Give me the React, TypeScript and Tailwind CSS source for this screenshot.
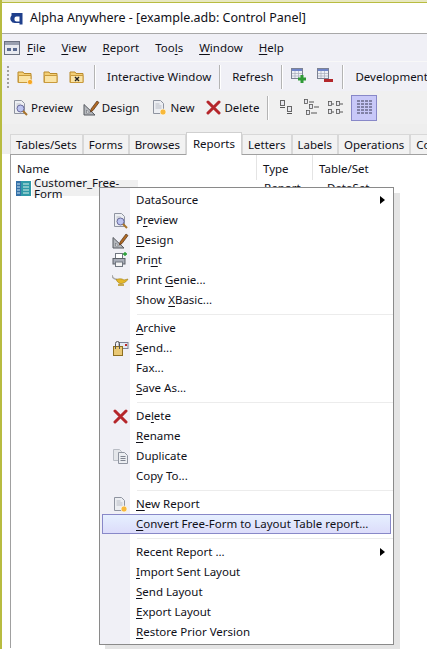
import type { ReactNode } from "react";

const Sep = () => <div className="mx-[8px] h-[24px] w-[2px] shrink-0 border-l border-[#b4b4b4] bg-white" />;

function Mn({ before = "", u, after = "" }: { before?: string; u: string; after?: string }) {
  return (
    <span className="whitespace-pre">
      {before}
      <span className="underline decoration-1 underline-offset-2">{u}</span>
      {after}
    </span>
  );
}

const Folder = ({ kind }: { kind?: "new" | "x" }) => (
  <svg width="17" height="16" viewBox="0 0 17 16">
    <path d="M1 3h5l1 1.500h7v9H1z" fill="#f3cf76" stroke="#b98a2c" />
    <path d="M1.500 6.500h12.500v7H1.500z" fill="#fae3a4" stroke="#c99a3c" />
    {kind === "new" && <circle cx="13" cy="13" r="2.600" fill="#f6a623" stroke="#fff" strokeWidth=".6" />}
    {kind === "x" && <path d="M6 8l4 4m0-4l-4 4" stroke="#222" strokeWidth="1.400" />}
  </svg>
);

const Page = ({ children }: { children?: ReactNode }) => (
  <svg width="17" height="17" viewBox="0 0 17 17">
    <path d="M2.500 1.500h7l3 3v10h-10z" fill="#eceef2" stroke="#8f94a0" />
    <path d="M4.500 5h4M4.500 7h6M4.500 9h6" stroke="#b9bdc6" />
    {children}
  </svg>
);

const Preview = () => (
  <Page>
    <circle cx="8.500" cy="9.500" r="3.500" fill="#bcc4f0" stroke="#6a6a9a" />
    <path d="M11 12l4 4" stroke="#a8742c" strokeWidth="2" />
  </Page>
);

const NewDoc = () => (
  <Page>
    <circle cx="12" cy="13" r="3" fill="#f8b93a" stroke="#fff" strokeWidth=".6" />
  </Page>
);

const DesignIcon = () => (
  <svg width="17" height="17" viewBox="0 0 17 17">
    <path d="M1 5.500v10.500h11z" fill="#b5b8bd" stroke="#55585e" />
    <path d="M3.500 11v3h3z" fill="#fff" stroke="#70737a" strokeWidth=".7" />
    <path d="M8 10l6-8 2 1.500-6 8-2.500 1.500z" fill="#b06a24" stroke="#50301a" strokeWidth=".7" />
  </svg>
);

const RedX = () => (
  <svg width="15" height="15" viewBox="0 0 15 15">
    <path d="M2 2l11 11M13 2L2 13" stroke="#b5262b" strokeWidth="3" strokeLinecap="round" />
  </svg>
);

const HelpIcon = () => (
  <svg width="15" height="15" viewBox="0 0 15 15">
    <circle cx="7.500" cy="7.500" r="6.800" fill="#5a66d8" stroke="#2f3794" />
    <text x="7.500" y="11.500" textAnchor="middle" fontSize="11" fontWeight="700" fill="#fff" fontFamily="Liberation Sans">?</text>
  </svg>
);

const RefreshIcon = () => (
  <svg width="15" height="16" viewBox="0 0 15 16">
    <path d="M3 10.500A5.200 5.200 0 0 1 9 2.800" fill="none" stroke="#2727d0" strokeWidth="2.200" />
    <path d="M8 .5l4 2.800-4 2.200z" fill="#2727d0" />
    <path d="M12 5.500A5.200 5.200 0 0 1 6 13.200" fill="none" stroke="#a02ab0" strokeWidth="2.200" />
    <path d="M7 15.500l-4-2.800 4-2.200z" fill="#a02ab0" />
  </svg>
);

const GridSign = ({ plus }: { plus: boolean }) => (
  <svg width="17" height="17" viewBox="0 0 17 17">
    <rect x=".5" y=".5" width="11" height="10" fill="#eef0f6" stroke="#7c8294" />
    <rect x="1" y="1" width="10" height="2" fill="#6f84c8" />
    <path d="M1 5.500h10M1 8h10M4 3v7M7.500 3v7" stroke="#a8adbb" strokeWidth=".7" />
    {plus ? (
      <path d="M11 7v8M7 11h8" stroke="#2f9a36" strokeWidth="3" />
    ) : (
      <rect x="7" y="11" width="9" height="3" fill="#b3262b" />
    )}
  </svg>
);

const RedBall = () => (
  <svg width="15" height="15" viewBox="0 0 15 15">
    <defs>
      <radialGradient id="ball" cx=".4" cy=".3" r=".8">
        <stop offset="0" stopColor="#ff9a8a" />
        <stop offset=".5" stopColor="#de2a1e" />
        <stop offset="1" stopColor="#861008" />
      </radialGradient>
    </defs>
    <circle cx="7.500" cy="7.500" r="7" fill="url(#ball)" />
  </svg>
);

const ViewIcon = ({ mode }: { mode: number }) => {
  const doc = (x: number, y: number, key: string) => (
    <rect key={key} x={x + 0.5} y={y + 0.5} width="3" height="4" fill="#e8e8ee" stroke="#555" strokeWidth=".8" />
  );
  return (
    <svg width="17" height="17" viewBox="0 0 17 17">
      {mode === 0 && (
        <>
          <rect x="1.500" y="1.500" width="4" height="5" fill="#e8e8ee" stroke="#666" />
          <path d="M1 8.500h5" stroke="#555" />
          <rect x="8.500" y="7.500" width="4" height="5" fill="#e8e8ee" stroke="#666" />
          <path d="M8 14.500h5" stroke="#555" />
        </>
      )}
      {mode === 1 && (
        <>
          {doc(1, 0, "a")}
          <path d="M6 3h5" stroke="#555" />
          {doc(6, 5, "b")}
          <path d="M11 8h5" stroke="#555" />
          {doc(3, 11, "c")}
          <path d="M8 14h6" stroke="#555" />
        </>
      )}
      {mode === 2 && (
        <>
          {doc(1, 2, "a")}
          <path d="M5 5h2" stroke="#555" />
          {doc(9, 2, "b")}
          <path d="M13 5h3" stroke="#555" />
          {doc(1, 10, "c")}
          <path d="M5 13h2" stroke="#555" />
          {doc(9, 10, "d")}
          <path d="M13 13h3" stroke="#555" />
        </>
      )}
    </svg>
  );
};

const DetailIcon = () => (
  <svg width="17" height="17" viewBox="0 0 17 17">
    <path
      d="M1 2h15M1 5h15M1 8h15M1 11h15M1 14h15"
      stroke="#3b3b55"
      strokeWidth="1"
      strokeDasharray="3 1"
    />
  </svg>
);

const PrintIcon = () => (
  <svg width="16" height="16" viewBox="0 0 16 16">
    <rect x="3.500" y="1.500" width="7" height="5" fill="#fff" stroke="#707680" />
    <rect x="1" y="6.500" width="12" height="5.500" fill="#a8adb8" stroke="#5c6068" />
    <rect x="3.500" y="10" width="7" height="4.500" fill="#f4f4f4" stroke="#707680" />
    <path d="M13 0v4M11 2h4" stroke="#1c9a2c" strokeWidth="1.300" />
  </svg>
);

const LampIcon = () => (
  <svg width="17" height="14" viewBox="0 0 17 14">
    <path d="M0 2c0 3 2 4 5 4.500" fill="none" stroke="#a8a8a8" strokeWidth="1.500" />
    <path d="M4 6.500c3 -1 6 -1 8 .5l4-1c-1 2-3 4-6 4.500H8C6 10 5 8 4 6.500z" fill="#e5b82a" stroke="#9c7a14" strokeWidth=".6" />
    <path d="M6 12h6" stroke="#b89018" strokeWidth="1.500" />
  </svg>
);

const SendIcon = () => (
  <svg width="17" height="17" viewBox="0 0 17 17">
    <rect x="7" y="2.500" width="9" height="6" fill="#e4e8f2" stroke="#7c8294" />
    <rect x="13" y="4" width="2" height="2" fill="#c02a2a" />
    <rect x="1.500" y="6.500" width="9" height="9" fill="#e9c874" stroke="#8e6f20" />
    <path d="M3.500 9V3.500a2 2 0 0 1 4 0V9" fill="none" stroke="#555" />
  </svg>
);

const DupIcon = () => (
  <svg width="17" height="17" viewBox="0 0 17 17">
    <path d="M1.500 1.500h6l2 2v9h-8z" fill="#e4e6ea" stroke="#b8bcc4" />
    <path d="M6.500 4.500h6l3 3v8h-9z" fill="#eceef2" stroke="#8f94a0" />
    <path d="M8.500 8.500h5M8.500 10.500h5M8.500 12.500h5" stroke="#7f8490" />
  </svg>
);

const ReportIcon = () => (
  <svg width="15" height="15" viewBox="0 0 15 15">
    <rect width="15" height="15" fill="#2f9aa8" />
    <rect width="5" height="15" fill="#3470a8" />
    <path d="M1 3h3M1 6h3M1 9h3M1 12h3" stroke="#c8e4f0" />
    <path d="M7 3h6M7 6h6M7 9h6M7 12h6" stroke="#d8f0e8" />
  </svg>
);

const Arrow = () => (
  <svg width="5" height="8" viewBox="0 0 5 8" className="absolute right-[8px] top-[6px]">
    <path d="M0 0l5 4-5 4z" fill="#000" />
  </svg>
);

type Item = { label: ReactNode; icon?: ReactNode; arrow?: boolean; active?: boolean } | "sep";

const items: Item[] = [
  { label: "DataSource", arrow: true },
  { label: <Mn before="P" u="r" after="eview" />, icon: <Preview /> },
  { label: <Mn u="D" after="esign" />, icon: <DesignIcon /> },
  { label: <Mn before="Pri" u="n" after="t" />, icon: <PrintIcon /> },
  { label: <Mn before="Print " u="G" after="enie..." />, icon: <LampIcon /> },
  { label: <Mn before="Show " u="X" after="Basic..." /> },
  "sep",
  { label: <Mn u="A" after="rchive" /> },
  { label: <Mn u="S" after="end..." />, icon: <SendIcon /> },
  { label: "Fax..." },
  { label: <Mn u="S" after="ave As..." /> },
  "sep",
  { label: <Mn before="De" u="l" after="ete" />, icon: <RedX /> },
  { label: <Mn u="R" after="ename" /> },
  { label: "Duplicate", icon: <DupIcon /> },
  { label: "Copy To..." },
  "sep",
  { label: <Mn u="N" after="ew Report" />, icon: <NewDoc /> },
  { label: <Mn u="C" after="onvert Free-Form to Layout Table report..." />, active: true },
  "sep",
  { label: "Recent Report ...", arrow: true },
  { label: <Mn u="I" after="mport Sent Layout" /> },
  { label: <Mn u="S" after="end Layout" /> },
  { label: <Mn u="E" after="xport Layout" /> },
  { label: <Mn u="R" after="estore Prior Version" /> },
];

function ContextMenu() {
  return (
    <div className="absolute left-[97px] top-[187px] w-[295px] border border-[#8a8a8a] bg-white py-[2px] shadow-[6px_6px_0_#e4e4e4]">
      <div className="absolute bottom-0 left-0 top-0 w-[30px] bg-[#f0f0f6]" />
      {items.map((item, i) =>
        item === "sep" ? (
          <div key={i} className="relative flex h-[8px] items-center pl-[37px]">
            <div className="h-[1px] w-full bg-[#ececec]" />
          </div>
        ) : (
          <div key={i} className="relative flex h-[20px] items-center px-[2px]">
            <div
              className={
                item.active
                  ? "flex h-[20px] w-[289px] items-center border border-[#8888c8] bg-gradient-to-b from-[#e6f0ff] to-[#dcdcfa]"
                  : "flex h-[20px] w-[289px] items-center border border-transparent"
              }
            >
              <div className="flex w-[33px] shrink-0 justify-center pl-[1px]">{item.icon}</div>
              <div className="text-[#101018]">{item.label}</div>
            </div>
            {item.arrow && <Arrow />}
          </div>
        ),
      )}
    </div>
  );
}

export default function App() {
  const tabs = ["Tables/Sets", "Forms", "Browses", "Reports", "Letters", "Labels", "Operations", "Code"];
  const menus = [
    <Mn u="F" after="ile" />,
    <Mn u="V" after="iew" />,
    <Mn u="R" after="eport" />,
    <Mn before="Too" u="l" after="s" />,
    <Mn u="W" after="indow" />,
    <Mn u="H" after="elp" />,
  ];

  return (
    <div className="relative h-[649px] w-[427px] overflow-hidden border-l-2 border-[#b8bc40] bg-white font-['Noto_Sans',sans-serif] text-[11.5px] leading-none text-[#101018]">
      <div className="h-[3px] border-b border-[#b8bc40] bg-[#e8e8c0]" />
      {/* title */}
      <div className="flex h-[31px] items-center gap-[5px] border-b border-[#a8a8a8] pl-[8px] text-[12.5px]">
        <svg width="15" height="15" viewBox="0 0 15 15">
          <path d="M1.500 2h11v11.500h-3V12H5a4.500 4.500 0 0 1-3.500-7.500zM4.500 8a2.200 2.200 0 0 0 2 2.500h3V5.500h-3A2.200 2.200 0 0 0 4.500 8z" fill="#1f3f8c" />
        </svg>
        <span>Alpha Anywhere - [example.adb: Control Panel]</span>
      </div>
      {/* menu bar */}
      <div className="flex h-[27px] items-center bg-[#f0f0f6] pl-[2px]">
        <svg width="16" height="14" viewBox="0 0 16 14" className="mr-[7px]">
          <rect x=".5" y=".5" width="15" height="13" fill="#e8eaf0" stroke="#6a7080" />
          <rect x="1" y="1" width="14" height="3" fill="#9aa0b0" />
          <rect x="3" y="7" width="4" height="3" fill="#5a6a90" />
          <rect x="9" y="7" width="4" height="3" fill="#5a6a90" />
        </svg>
        <div className="flex gap-[16px]">{menus.map((m, i) => <div key={i}>{m}</div>)}</div>
      </div>
      {/* toolbar 1 */}
      <div className="flex h-[30px] items-center overflow-hidden whitespace-nowrap border-t border-[#f8f8f8] bg-[#f0f0f6] pl-[5px]">
        <div className="mr-[8px] h-[22px] w-[2px] border-l-2 border-dotted border-[#a0a0a0]" />
        <div className="flex gap-[9px]"><Folder kind="new" /><Folder /><Folder kind="x" /></div>
        <Sep />
        <HelpIcon />
        <span className="ml-[3px]">Interactive Window</span>
        <Sep />
        <RefreshIcon />
        <span className="ml-[3px]">Refresh</span>
        <Sep />
        <div className="flex gap-[9px]"><GridSign plus /><GridSign plus={false} /></div>
        <Sep />
        <RedBall />
        <span className="ml-[3px]">Development</span>
      </div>
      {/* toolbar 2 */}
      <div className="flex h-[33px] items-center bg-[#f0f0f0] pl-[10px]">
        <Preview />
        <span className="ml-[2px] mr-[10px]">Preview</span>
        <DesignIcon />
        <span className="ml-[2px] mr-[12px]">Design</span>
        <NewDoc />
        <span className="ml-[2px] mr-[12px]">New</span>
        <RedX />
        <span className="ml-[3px]">Delete</span>
        <Sep />
        <div className="ml-[2px] flex items-center gap-[7px]">
          <ViewIcon mode={0} />
          <ViewIcon mode={1} />
          <ViewIcon mode={2} />
          <div className="flex h-[26px] w-[26px] items-center justify-center border border-[#8888c8] bg-[#c8c8f8]">
            <DetailIcon />
          </div>
        </div>
      </div>
      {/* tabs */}
      <div className="flex h-[30px] items-end bg-[#eeeeee] pl-[8px]">
        {tabs.map((t) => (
          <div
            key={t}
            className={
              t === "Reports"
                ? "relative top-[1px] flex h-[23px] items-center border border-b-0 border-[#d0d0d0] bg-white px-[6px]"
                : "flex h-[20px] items-center border border-b-0 border-[#d8d8d8] bg-[#f2f2f2] px-[5px]"
            }
          >
            {t}
          </div>
        ))}
      </div>
      {/* list */}
      <div className="ml-[8px] h-[494px] border-l border-t border-[#a0a0a0] bg-white">
        <div className="flex h-[25px] items-center">
          <div className="h-full w-[246px] border-r border-[#e4e4e4] pl-[6px] pt-[8px]">Name</div>
          <div className="h-full w-[56px] border-r border-[#e4e4e4] pl-[6px] pt-[8px]">Type</div>
          <div className="h-full pl-[6px] pt-[8px]">Table/Set</div>
        </div>
        <div className="flex h-[16px] items-center">
          <div className="flex w-[247px] items-center pl-[5px]">
            <ReportIcon />
            <span className="ml-[1px] flex h-[16px] w-[106px] items-center bg-[#f0f0f0] pl-[2px]">Customer_Free-Form</span>
          </div>
          <span className="w-[56px] pl-[6px]">Report</span>
          <span className="pl-[13px]">DataSet</span>
        </div>
      </div>
      <ContextMenu />
    </div>
  );
}
